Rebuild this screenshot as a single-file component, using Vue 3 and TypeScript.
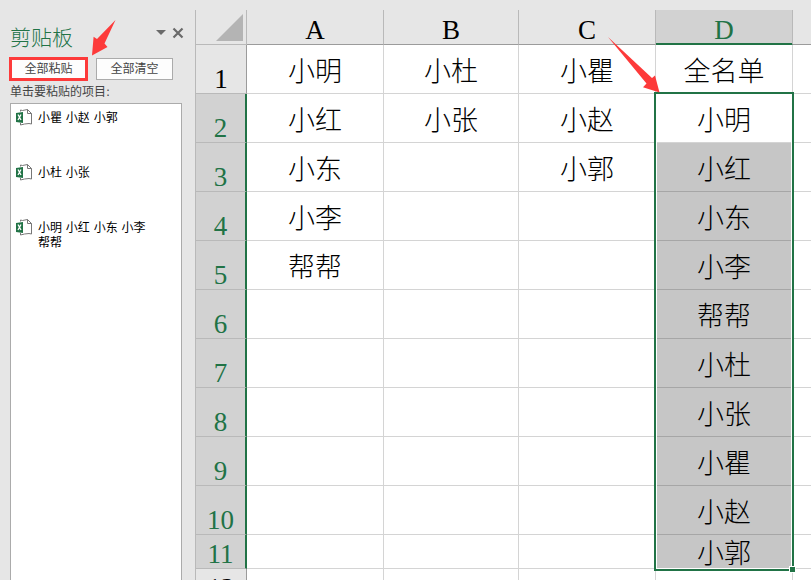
<script setup lang="ts">
import { ref, computed } from 'vue'

interface SheetRow {
  num: number
  height: number
  cells: string[]
}

const clips = ref<string[]>(['小瞿 小赵 小郭', '小杜 小张', '小明 小红 小东 小李 帮帮'])

const columns = ['A', 'B', 'C', 'D', '']

const values: string[][] = [
  ['小明', '小杜', '小瞿', '全名单', ''],
  ['小红', '小张', '小赵', '小明', ''],
  ['小东', '', '小郭', '小红', ''],
  ['小李', '', '', '小东', ''],
  ['帮帮', '', '', '小李', ''],
  ['', '', '', '帮帮', ''],
  ['', '', '', '小杜', ''],
  ['', '', '', '小张', ''],
  ['', '', '', '小瞿', ''],
  ['', '', '', '小赵', ''],
  ['', '', '', '小郭', ''],
  ['', '', '', '', ''],
]

const rows: SheetRow[] = values.map((cells, i) => ({
  num: i + 1,
  height: i >= 10 ? 34 : 49,
  cells,
}))

const first = 2
const last = 11
const selectedColumn = 3

const inRange = (n: number) => n >= first && n <= last

const selectionHeight = computed(() =>
  rows.filter((r) => inRange(r.num)).reduce((sum, r) => sum + r.height, 0),
)
</script>

<template>
  <div class="app">
    <aside class="pane">
      <header class="pane-head">
        <h1>剪贴板</h1>
        <div class="pane-tools">
          <button class="tool" type="button" aria-label="选项">
            <svg width="10" height="6" viewBox="0 0 10 6"><path d="M0 0h10L5 5z" fill="#6a6a6a" /></svg>
          </button>
          <button class="tool" type="button" aria-label="关闭">
            <svg width="12" height="12" viewBox="0 0 12 12">
              <path d="M1.5 1.5l9 9M10.5 1.5l-9 9" stroke="#6a6a6a" stroke-width="2.2" />
            </svg>
          </button>
        </div>
      </header>
      <div class="actions">
        <button class="action marked" type="button">全部粘贴</button>
        <button class="action" type="button" @click="clips = []">全部清空</button>
      </div>
      <p id="clip-label" class="label">单击要粘贴的项目:</p>
      <ul class="clips" aria-labelledby="clip-label">
        <li v-for="clip in clips" :key="clip" class="clip">
          <svg class="clip-icon" width="17" height="17" viewBox="0 0 17 17">
            <path
              d="M4.500 2.500V1l2 .5 5-1 4 4v10.500l-2.500-.5-4.500.500-4 1V14"
              fill="#fff"
              stroke="#777"
            />
            <path d="M11.500 .5v4h4" fill="none" stroke="#777" />
            <path d="M0 4l7-1v11l-7-1z" fill="#217346" />
            <path d="M2 5.500l3 5.500M5 5.500l-3 5.500" stroke="#fff" stroke-width="1.3" />
          </svg>
          <span>{{ clip }}</span>
        </li>
      </ul>
    </aside>

    <main class="sheet">
      <table>
        <colgroup>
          <col class="c-num" />
          <col class="c-wide" />
          <col class="c-mid" />
          <col class="c-wide" />
          <col class="c-wide" />
          <col />
        </colgroup>
        <thead>
          <tr>
            <th class="corner">
              <svg width="27" height="27" viewBox="0 0 27 27"><path d="M27 0v27H0z" fill="#b4b4b4" /></svg>
            </th>
            <th v-for="(c, i) in columns" :key="i" scope="col" :class="{ active: i === selectedColumn }">{{ c }}</th>
          </tr>
        </thead>
        <tbody>
          <tr v-for="row in rows" :key="row.num" :style="{ height: row.height + 'px' }">
            <th scope="row" :class="{ active: inRange(row.num) }">{{ row.num }}</th>
            <td
              v-for="(cell, i) in row.cells"
              :key="i"
              :class="{
                anchor: i === selectedColumn && row.num === first,
                filled: i === selectedColumn && row.num > first && row.num <= last,
              }"
            >
              {{ cell }}
              <div
                v-if="i === selectedColumn && row.num === first"
                class="selection"
                :style="{ height: selectionHeight + 'px' }"
              >
                <i class="handle"></i>
              </div>
            </td>
          </tr>
        </tbody>
      </table>
    </main>

    <svg class="arrow arrow-paste" width="26" height="38" viewBox="0 0 26 38">
      <path d="M24.500 1L6 20 2.600 17.700 1 36.500 16.500 28 13.500 24.500z" fill="#fd3a3a" />
    </svg>
    <svg class="arrow arrow-list" width="54" height="58" viewBox="0 0 54 58">
      <path d="M1 1L45 42 48 39.500 52.500 56.500 36 51.300 39.500 47.500z" fill="#fd3a3a" />
    </svg>
  </div>
</template>

<style>
body {
  margin: 0;
}
</style>

<style scoped>
.app {
  position: relative;
  display: flex;
  height: 100vh;
  overflow: hidden;
  background: #e6e6e6;
  font-family: 'DejaVu Sans', 'Noto Sans CJK SC', sans-serif;
  font-size: 12px;
  color: #000;
}

.pane {
  display: flex;
  flex: 0 0 195px;
  flex-direction: column;
  box-sizing: border-box;
  padding: 20px 13px 0 10px;
}

.pane-head {
  display: flex;
  justify-content: space-between;
  height: 37px;
}

h1 {
  margin: 0;
  font-family: 'Noto Sans CJK SC', sans-serif;
  font-size: 21px;
  font-weight: 300;
  line-height: 33px;
  color: #217346;
}

.pane-tools {
  display: flex;
  align-items: center;
  gap: 6px;
  height: 26px;
  margin-right: -2px;
}

.tool {
  display: flex;
  padding: 0;
  border: 0;
  background: none;
}

.actions {
  display: flex;
  align-items: center;
  gap: 8px;
  margin-left: -1px;
}

.action {
  box-sizing: border-box;
  width: 77px;
  height: 22px;
  padding: 0;
  border: 1px solid #ababab;
  background: #fdfdfd;
  font-family: inherit;
  font-size: 12px;
  line-height: 16px;
  color: #444;
}

.action.marked {
  width: 79px;
  height: 24px;
  border: 3px solid #fd3a3a;
}

.label {
  margin: 0;
  font-size: 12px;
  line-height: 22px;
  color: #444;
}

.clips {
  flex: 1;
  margin: 0;
  padding: 5px 26px 0 5px;
  border: 1px solid #ababab;
  border-bottom: 0;
  background: #fff;
  list-style: none;
}

.clip {
  display: flex;
  gap: 5px;
  height: 55px;
  line-height: 15px;
}

.clip span {
  padding-top: 2px;
}

.clip-icon {
  flex: none;
}

.sheet {
  flex: 1;
  min-width: 0;
  padding-top: 10px;
}

table {
  width: 100%;
  table-layout: fixed;
  border-spacing: 0;
  border-left: 1px solid #b9b9b9;
  font-family: 'Liberation Serif', 'Noto Sans CJK SC', serif;
  font-size: 27px;
  line-height: 28px;
}

.c-num {
  width: 51px;
}

.c-wide {
  width: 137px;
}

.c-mid {
  width: 135px;
}

th,
td {
  box-sizing: border-box;
  padding: 0;
  border-right: 1px solid #d4d4d4;
  border-bottom: 1px solid #d4d4d4;
  text-align: center;
  font-weight: 300;
}

td {
  padding-top: 5px;
  background: #fff;
  vertical-align: middle;
}

thead th {
  height: 35px;
  border-right-color: #b9b9b9;
  border-bottom-color: #9b9b9b;
  vertical-align: bottom;
}

thead th.active {
  border-bottom-color: #217346;
  background: #d2d2d2;
  box-shadow: inset 0 -1px #217346;
  color: #217346;
}

thead th.corner {
  border-bottom-color: #b9b9b9;
}

th:last-child,
td:last-child {
  border-right: 0;
}

.corner svg {
  display: block;
  margin: 0 3px 3px auto;
}

tbody th {
  border-right-color: #9b9b9b;
  border-bottom-color: #b9b9b9;
  vertical-align: bottom;
}

tbody th.active {
  border-right: 2px solid #217346;
  background: #d2d2d2;
  color: #217346;
}

td.anchor {
  position: relative;
}

td.filled {
  border-bottom-color: #a6a6a6;
  background: #c6c6c6;
}

.selection {
  position: absolute;
  top: -2px;
  right: -2px;
  left: -2px;
  border: 2px solid #217346;
  box-shadow: inset 0 0 0 1px #fff;
  box-sizing: content-box;
}

.handle {
  position: absolute;
  right: -4px;
  bottom: -4px;
  width: 5px;
  height: 5px;
  border: 1px solid #fff;
  background: #217346;
}

.arrow {
  position: absolute;
  pointer-events: none;
}

.arrow-paste {
  top: 19px;
  left: 91px;
}

.arrow-list {
  top: 36px;
  left: 607px;
}
</style>
